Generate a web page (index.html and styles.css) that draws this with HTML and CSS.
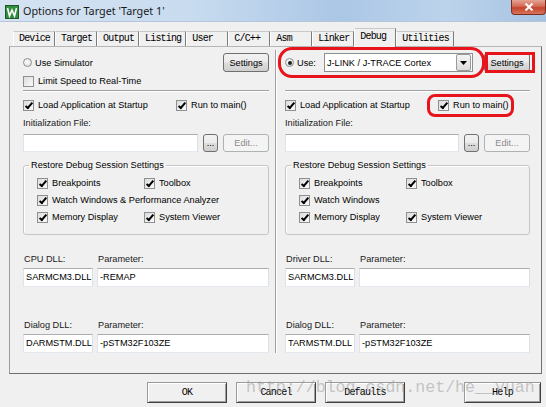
FILE: index.html
```html
<!DOCTYPE html>
<html lang="en">
<head>
  <meta charset="UTF-8">
  <title>Options for Target 'Target 1'</title>
  <link rel="stylesheet" href="styles.css">
</head>
<body>
  <div class="window">
    <div class="titlebar">
      <svg class="app-icon" width="14" height="14" viewBox="0 0 14 14">
        <rect x="0.5" y="0.5" width="13" height="13" fill="#2f8f3f" stroke="#1d5a27"/>
        <polyline points="2.5,3 4.5,11 7,5 9.5,11 11.5,3" fill="none" stroke="#fff" stroke-width="1.6"/>
      </svg>
      <span class="title">Options for Target 'Target 1'</span>
      <div class="close-btn">
        <svg width="10" height="8" viewBox="0 0 10 8">
          <path d="M1.5 0.5 L8.5 7.5 M8.5 0.5 L1.5 7.5" stroke="#fff" stroke-width="2"/>
        </svg>
      </div>
    </div>

    <div class="client">
      <div class="tabs">
        <div class="tab">Device</div>
        <div class="tab">Target</div>
        <div class="tab">Output</div>
        <div class="tab">Listing</div>
        <div class="tab">User</div>
        <div class="tab">C/C++</div>
        <div class="tab">Asm</div>
        <div class="tab">Linker</div>
        <div class="tab active">Debug</div>
        <div class="tab">Utilities</div>
      </div>

      <div class="panel">
        <!-- simulator side -->
        <div class="col col-left">
          <div class="row-top">
            <label class="opt"><span class="radio"></span>Use Simulator</label>
            <button class="btn btn-settings">Settings</button>
          </div>
          <label class="opt row-limit"><span class="check"></span>Limit Speed to Real-Time</label>
          <div class="sep"></div>
          <div class="row-pair">
            <label class="opt"><span class="check on"></span>Load Application at Startup</label>
            <label class="opt"><span class="check on"></span>Run to main()</label>
          </div>
          <div class="caption">Initialization File:</div>
          <div class="file-row">
            <div class="field"></div>
            <button class="btn btn-dots">...</button>
            <button class="btn btn-edit" disabled>Edit...</button>
          </div>
          <fieldset class="group">
            <legend>Restore Debug Session Settings</legend>
            <div class="group-grid">
              <label class="opt"><span class="check on"></span>Breakpoints</label>
              <label class="opt"><span class="check on"></span>Toolbox</label>
              <label class="opt wide"><span class="check on"></span>Watch Windows &amp; Performance Analyzer</label>
              <label class="opt"><span class="check on"></span>Memory Display</label>
              <label class="opt"><span class="check on"></span>System Viewer</label>
            </div>
          </fieldset>
          <div class="dll dll-first">
            <span class="caption">CPU DLL:</span>
            <span class="caption">Parameter:</span>
            <div class="field">SARMCM3.DLL</div>
            <div class="field">-REMAP</div>
          </div>
          <div class="dll dll-second">
            <span class="caption">Dialog DLL:</span>
            <span class="caption">Parameter:</span>
            <div class="field">DARMSTM.DLL</div>
            <div class="field">-pSTM32F103ZE</div>
          </div>
        </div>

        <div class="divider"></div>

        <!-- target driver side -->
        <div class="col col-right">
          <div class="row-top">
            <label class="opt"><span class="radio on"></span>Use:</label>
            <div class="combo">
              <span class="combo-text">J-LINK / J-TRACE Cortex</span>
              <span class="combo-arrow">
                <svg width="7" height="4" viewBox="0 0 7 4"><path d="M0 0 H7 L3.5 4 Z" fill="#000"/></svg>
              </span>
            </div>
            <button class="btn btn-settings">Settings</button>
          </div>
          <div class="row-limit"></div>
          <div class="sep"></div>
          <div class="row-pair">
            <label class="opt"><span class="check on"></span>Load Application at Startup</label>
            <label class="opt"><span class="check on"></span>Run to main()</label>
          </div>
          <div class="caption">Initialization File:</div>
          <div class="file-row">
            <div class="field"></div>
            <button class="btn btn-dots">...</button>
            <button class="btn btn-edit" disabled>Edit...</button>
          </div>
          <fieldset class="group">
            <legend>Restore Debug Session Settings</legend>
            <div class="group-grid">
              <label class="opt"><span class="check on"></span>Breakpoints</label>
              <label class="opt"><span class="check on"></span>Toolbox</label>
              <label class="opt wide"><span class="check on"></span>Watch Windows</label>
              <label class="opt"><span class="check on"></span>Memory Display</label>
              <label class="opt"><span class="check on"></span>System Viewer</label>
            </div>
          </fieldset>
          <div class="dll dll-first">
            <span class="caption">Driver DLL:</span>
            <span class="caption">Parameter:</span>
            <div class="field">SARMCM3.DLL</div>
            <div class="field"></div>
          </div>
          <div class="dll dll-second">
            <span class="caption">Dialog DLL:</span>
            <span class="caption">Parameter:</span>
            <div class="field">TARMSTM.DLL</div>
            <div class="field">-pSTM32F103ZE</div>
          </div>
        </div>
      </div>

      <div class="buttons">
        <button class="btn-classic">OK</button>
        <button class="btn-classic">Cancel</button>
        <button class="btn-classic">Defaults</button>
        <button class="btn-classic btn-help">Help</button>
      </div>
    </div>

    <!-- annotations drawn over the screenshot -->
    <div class="mark mark-use"></div>
    <div class="mark mark-settings"></div>
    <div class="mark mark-run"></div>
    <div class="watermark">http://blog.csdn.net/he__yuan</div>
  </div>
</body>
</html>
```

FILE: styles.css
```css
body {
  margin: 0;
  background: #f0f0f0;
}
.window {
  position: relative;
  width: 546px;
  height: 407px;
  overflow: hidden;
  background: #f0f0f0;
  font-family: "Liberation Sans", Arial, sans-serif;
  font-size: 9.2px;
  color: #000;
}
.titlebar {
  height: 22px;
  box-sizing: border-box;
  display: flex;
  align-items: center;
  padding-left: 5px;
  background: linear-gradient(to right, #d5e3f2 0%, #c8dbef 35%, #abc7e6 62%, #bcd3eb 82%, #a6c2e2 100%);
  border-bottom: 1px solid #b4c6da;
}
.app-icon {
  display: block;
  margin-top: 2px;
}
.title {
  margin-left: 4px;
  font-family: "Noto Sans", "Liberation Sans", sans-serif;
  font-size: 10.8px;
  color: #1a1a1a;
}
.close-btn {
  margin-left: auto;
  align-self: flex-start;
  width: 35px;
  height: 15px;
  box-sizing: border-box;
  display: flex;
  align-items: center;
  justify-content: center;
  background: linear-gradient(#e6a393, #d46a55 45%, #c4432c 55%, #d9735a);
  border: 1px solid #7d2d20;
  border-top: none;
  border-radius: 0 0 4px 4px;
}
.close-btn svg {
  display: block;
}
.client {
  padding: 6px 0 0 9px;
}
.tabs {
  display: flex;
  align-items: flex-end;
  height: 18px;
  padding-left: 4px;
}
.tab {
  position: relative;
  height: 15px;
  min-width: 42px;
  box-sizing: border-box;
  padding: 0 4px 0 5px;
  border: 1px solid;
  border-color: #c9c9c9 #7c7c7c transparent #ffffff;
  border-bottom: none;
  font-family: "Liberation Mono", monospace;
  font-size: 10px;
  letter-spacing: -0.83px;
  line-height: 14px;
  white-space: nowrap;
}
.tab.active {
  height: 19px;
  margin-bottom: -1px;
  background: #f0f0f0;
  line-height: 15px;
  z-index: 1;
}
.panel {
  display: flex;
  width: 533px;
  height: 328px;
  box-sizing: border-box;
  border: 1px solid;
  border-color: #b5b5b5 #6f6f6f #6f6f6f #9c9c9c;
}
.col {
  display: flex;
  flex-direction: column;
  box-sizing: border-box;
  padding-top: 6px;
}
.col-left {
  width: 265px;
  padding-left: 13px;
  padding-right: 6px;
}
.col-right {
  width: 264px;
  padding-left: 8px;
  padding-right: 11px;
}
.divider {
  width: 1px;
  margin: 3px 0 20px;
  background: #a0a0a0;
  border-right: 1px solid #fff;
}
.opt {
  display: flex;
  align-items: center;
  height: 14px;
  white-space: nowrap;
}
.check {
  position: relative;
  width: 11px;
  height: 11px;
  box-sizing: border-box;
  margin-right: 4px;
  flex: none;
  border: 1px solid #8e8f8f;
  background: linear-gradient(135deg, #dcdcdc, #fbfbfb);
}
.check.on::after {
  content: '';
  position: absolute;
  left: 3px;
  top: 0;
  width: 2px;
  height: 6px;
  border: solid #000;
  border-width: 0 2px 2px 0;
  transform: rotate(40deg);
}
.radio {
  position: relative;
  width: 9px;
  height: 9px;
  box-sizing: border-box;
  margin-right: 3px;
  flex: none;
  border: 1px solid #8e8f8f;
  border-radius: 50%;
  background: radial-gradient(circle at 40% 40%, #ffffff, #d6d6d6);
}
.radio.on::after {
  content: '';
  position: absolute;
  left: 1.5px;
  top: 1.5px;
  width: 4px;
  height: 4px;
  border-radius: 50%;
  background: #1e1e1e;
}
.row-top {
  display: flex;
  align-items: center;
  justify-content: space-between;
  height: 19px;
}
.btn {
  height: 19px;
  box-sizing: border-box;
  padding: 0;
  border: 1px solid #707070;
  border-radius: 3px;
  background: linear-gradient(#f2f2f2, #ebebeb 48%, #dddddd 52%, #cfcfcf);
  font-family: inherit;
  font-size: 9.2px;
  color: #000;
}
.btn-settings {
  width: 46px;
}
.btn-dots {
  width: 15px;
  height: 18px;
}
.btn-edit {
  width: 46px;
  height: 18px;
  border-color: #adb2b5;
  background: #f4f4f4;
  color: #8c8c8c;
}
.combo {
  display: flex;
  align-items: center;
  width: 149px;
  height: 19px;
  box-sizing: border-box;
  margin-left: 8px;
  margin-right: auto;
  border: 1px solid #8f8f8f;
  background: #fff;
}
.combo-text {
  flex: 1;
  padding-left: 2px;
}
.combo-arrow {
  display: flex;
  align-items: center;
  justify-content: center;
  width: 13px;
  height: 15px;
  margin-right: 1px;
  border: 1px solid #9a9a9a;
  border-radius: 2px;
  background: linear-gradient(#f4f4f4, #dcdcdc);
}
.combo-arrow svg {
  display: block;
}
.row-limit {
  height: 14px;
  margin-top: 2px;
}
.sep {
  height: 0;
  margin-top: 2px;
  border-top: 1px solid #a0a0a0;
  border-bottom: 1px solid #fff;
}
.row-pair {
  display: grid;
  grid-template-columns: 153px 1fr;
  margin-top: 6px;
}
.caption {
  display: block;
  height: 14px;
  line-height: 14px;
  color: #1a1a1a;
}
.col > .caption {
  margin-top: 4px;
}
.file-row {
  display: flex;
  gap: 5px;
  margin-top: 4px;
}
.file-row .field {
  flex: 1;
  height: 18px;
}
.field {
  height: 19px;
  box-sizing: border-box;
  padding-left: 2px;
  border: 1px solid;
  border-color: #abadb3 #dbdfe6 #e3e9ef #e2e3ea;
  background: #fff;
  line-height: 17px;
  white-space: nowrap;
  overflow: hidden;
}
.group {
  margin: 6px 0 0;
  padding: 4px 0 10px 13px;
  min-width: 0;
  border: 1px solid #c6c6c6;
  border-radius: 3px;
  box-shadow: inset 1px 1px #fff;
}
.group legend {
  margin-left: -8px;
  padding: 0 2px;
  line-height: 14px;
}
.group-grid {
  display: grid;
  grid-template-columns: 107px 1fr;
  row-gap: 3px;
}
.group-grid .wide {
  grid-column: 1 / -1;
}
.dll {
  display: grid;
  grid-template-columns: 70px 1fr;
  column-gap: 4px;
  row-gap: 2px;
}
.dll .caption {
  padding-left: 1px;
}
.dll-first {
  margin-top: 17px;
}
.dll-second {
  margin-top: 31px;
}
.buttons {
  display: flex;
  gap: 9px;
  padding: 8px 5px 0 138px;
}
.btn-classic {
  width: 80px;
  height: 21px;
  box-sizing: border-box;
  padding: 0;
  border: 1px solid;
  border-color: #9a9a9a #404040 #404040 #9a9a9a;
  background: #f0f0f0;
  box-shadow: inset 1px 1px #ffffff, inset -1px -1px #a0a0a0;
  font-family: "Liberation Mono", monospace;
  font-size: 10px;
  letter-spacing: -0.8px;
  color: #000;
}
.btn-help {
  width: 77px;
  margin-left: auto;
}
.mark {
  position: absolute;
  box-sizing: border-box;
  border: 3px solid #e8141c;
}
.mark-use {
  left: 278px;
  top: 47px;
  width: 207px;
  height: 31px;
  border-radius: 14px;
}
.mark-settings {
  left: 485px;
  top: 52px;
  width: 50px;
  height: 21px;
}
.mark-run {
  left: 427px;
  top: 94px;
  width: 87px;
  height: 23px;
  border-radius: 8px;
}
.watermark {
  position: absolute;
  left: 246px;
  top: 378px;
  font-family: "Liberation Mono", monospace;
  font-size: 16.6px;
  line-height: 20px;
  color: rgba(150, 150, 150, 0.5);
  white-space: nowrap;
}
```
